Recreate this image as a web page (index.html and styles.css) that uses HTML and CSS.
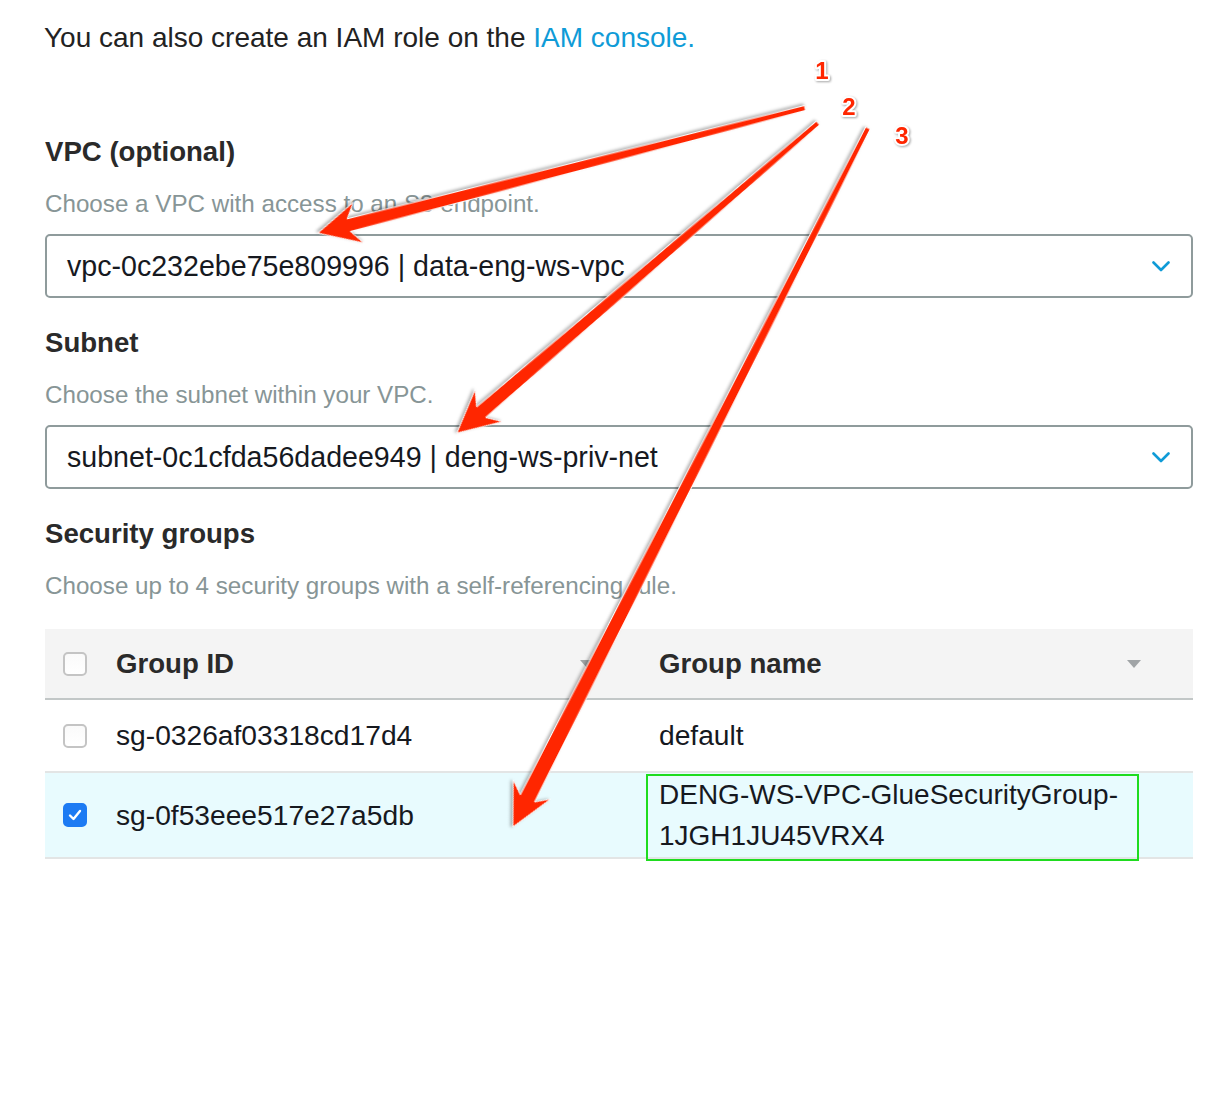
FILE: index.html
```html
<!DOCTYPE html>
<html lang="en">
<head>
<meta charset="utf-8">
<title>Network settings</title>
<link rel="stylesheet" href="styles.css">
</head>
<body>
<div class="page">
  <p class="intro">You can also create an IAM role on the <a class="link" href="#">IAM console.</a></p>

  <section class="field field-first">
    <h2 class="label">VPC (optional)</h2>
    <p class="hint">Choose a VPC with access to an S3 endpoint.</p>
    <div class="select">
      <span class="select-value">vpc-0c232ebe75e809996 | data-eng-ws-vpc</span>
      <svg class="chevron" width="18" height="11" viewBox="0 0 18 11"><path d="M1.5 1.5 L9 9 L16.5 1.5" fill="none" stroke="#0f9bd7" stroke-width="2.6" stroke-linecap="round" stroke-linejoin="round"/></svg>
    </div>
  </section>

  <section class="field">
    <h2 class="label">Subnet</h2>
    <p class="hint">Choose the subnet within your VPC.</p>
    <div class="select">
      <span class="select-value">subnet-0c1cfda56dadee949 | deng-ws-priv-net</span>
      <svg class="chevron" width="18" height="11" viewBox="0 0 18 11"><path d="M1.5 1.5 L9 9 L16.5 1.5" fill="none" stroke="#0f9bd7" stroke-width="2.6" stroke-linecap="round" stroke-linejoin="round"/></svg>
    </div>
  </section>

  <section class="field">
    <h2 class="label">Security groups</h2>
    <p class="hint">Choose up to 4 security groups with a self-referencing rule.</p>
  </section>

  <div class="table">
    <div class="tr thead">
      <div class="td c1">
        <span class="cb"></span>
        <span class="th-text">Group ID</span>
        <span class="caret"></span>
      </div>
      <div class="td c2">
        <span class="th-text">Group name</span>
        <span class="caret"></span>
      </div>
    </div>
    <div class="tr row">
      <div class="td c1"><span class="cb"></span><span class="cell-text">sg-0326af03318cd17d4</span></div>
      <div class="td c2"><span class="cell-text">default</span></div>
    </div>
    <div class="tr row row-selected">
      <div class="td c1">
        <span class="cb cb-checked"><svg width="14" height="12" viewBox="0 0 14 12"><path d="M2 6.5 L5.5 10 L12 2" fill="none" stroke="#fff" stroke-width="2.4" stroke-linecap="round" stroke-linejoin="round"/></svg></span>
        <span class="cell-text">sg-0f53eee517e27a5db</span>
      </div>
      <div class="td c2 c2-wrap"><span class="cell-text">DENG-WS-VPC-GlueSecurityGroup-<br>1JGH1JU45VRX4</span></div>
    </div>
  </div>
</div>

<svg class="annotations" width="1232" height="1094" viewBox="0 0 1232 1094">
  <rect class="highlight" x="647" y="775" width="491" height="85"/>
  <g class="arrow">
    <polygon transform="translate(805 108) rotate(165.6)" points="503,0 461,-21 471,-6.5 0,-2.5 0,2.5 471,6.5 461,21"/>
    <polygon transform="translate(818 123) rotate(139.35)" points="476,0 434,-21 444,-7 0,-2.5 0,2.5 444,7 434,21"/>
    <polygon transform="translate(868 128) rotate(116.93)" points="784,0 742,-21 752,-8 0,-2.5 0,2.5 752,8 742,21"/>
  </g>
  <g class="nums">
    <text x="822" y="79">1</text>
    <text x="849" y="115">2</text>
    <text x="902" y="144">3</text>
  </g>
</svg>
</body>
</html>
```

FILE: styles.css
```css
html, body {
  margin: 0;
  padding: 0;
  background: #ffffff;
}

body {
  font-family: "Liberation Sans", Arial, Helvetica, sans-serif;
  color: #16191f;
  position: relative;
  width: 1232px;
  min-height: 1094px;
}

.page {
  padding: 20px 0 0 45px;
  width: 1148px;
}

.intro {
  margin: 0 0 0 -1px;
  font-size: 28px;
  line-height: 36px;
  color: #222222;
}

.link {
  color: #0f9bd7;
  text-decoration: none;
}

.field {
  margin-top: 27px;
}

.field-first {
  margin-top: 78px;
}

.label {
  margin: 0 0 18px 0;
  font-size: 27.6px;
  line-height: 36px;
  font-weight: 700;
  color: #2a2a2a;
}

.hint {
  margin: 0 0 14px 0;
  font-size: 24.2px;
  line-height: 32px;
  color: #879596;
}

.select {
  box-sizing: border-box;
  height: 64px;
  border: 2px solid #8f9b9c;
  border-radius: 5px;
  padding: 0 21px 0 20px;
  display: flex;
  align-items: center;
  justify-content: space-between;
}

.select-value {
  font-size: 28.6px;
  line-height: 36px;
  color: #16191f;
}

.chevron {
  display: block;
}

.table {
  margin-top: 27px;
  width: 1148px;
}

.tr {
  display: grid;
  grid-template-columns: 596px 552px;
}

.td {
  display: flex;
  align-items: center;
  box-sizing: border-box;
  padding-left: 18px;
}

.thead {
  background: #f4f4f4;
  height: 71px;
  border-bottom: 2px solid #c2c7c7;
  box-sizing: border-box;
}

.thead .c1 {
  padding-right: 47px;
}

.thead .c2 {
  padding-right: 52px;
}

.th-text {
  font-size: 27.6px;
  font-weight: 700;
  line-height: 36px;
  color: #2a2a2a;
  flex: 1;
}

.caret {
  width: 0;
  height: 0;
  border-left: 7px solid transparent;
  border-right: 7px solid transparent;
  border-top: 8px solid #a0a4a6;
}

.cb {
  box-sizing: border-box;
  width: 24px;
  height: 24px;
  flex: none;
  border: 2px solid #c4c4c4;
  border-radius: 5px;
  background: linear-gradient(#fafafa, #ffffff);
  margin-right: 29px;
  display: flex;
  align-items: center;
  justify-content: center;
}

.cb-checked {
  border-color: #1d7bf3;
  background: #1d7bf3;
}

.row {
  border-bottom: 2px solid #e3e5e5;
}

.row .td {
  padding-top: 15px;
  padding-bottom: 15px;
}

.cell-text {
  font-size: 28.2px;
  line-height: 41px;
  color: #16191f;
}

.row-selected {
  background: #e8fbfe;
}

.row-selected .td {
  padding-top: 1px;
  padding-bottom: 1px;
}

.c2-wrap .cell-text {
  font-size: 28px;
}

.annotations {
  position: absolute;
  left: 0;
  top: 0;
  pointer-events: none;
}

.highlight {
  fill: none;
  stroke: #1fdc1f;
  stroke-width: 2;
}

.arrow polygon {
  fill: #ff2600;
  stroke: #ffffff;
  stroke-width: 1;
  stroke-linejoin: round;
  filter: drop-shadow(1px 2px 1.5px rgba(0, 0, 0, 0.3));
}

.nums text {
  font-family: "Liberation Sans", Arial, sans-serif;
  font-weight: 700;
  font-size: 24px;
  fill: #ff2600;
  stroke: #ffffff;
  stroke-width: 4px;
  stroke-linejoin: round;
  paint-order: stroke;
  text-anchor: middle;
  filter: drop-shadow(1px 1.5px 1px rgba(0, 0, 0, 0.35));
}
```
